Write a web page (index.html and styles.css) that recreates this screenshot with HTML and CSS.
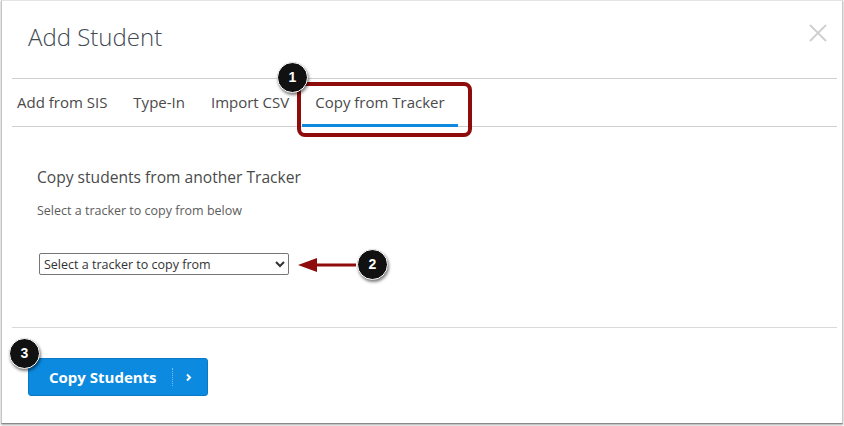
FILE: index.html
```html
<!DOCTYPE html>
<html lang="en">
<head>
<meta charset="utf-8">
<title>Add Student</title>
<link rel="stylesheet" href="styles.css">
</head>
<body>
<div class="modal">
  <header class="head">
    <h1 class="title">Add Student</h1>
    <svg class="close" width="18" height="18" viewBox="0 0 18 18"><path d="M1 1L17 17M17 1L1 17" stroke="#cfcfcf" stroke-width="1.8" fill="none"/></svg>
  </header>
  <nav class="tabs">
    <span class="tab">Add from SIS</span>
    <span class="tab">Type-In</span>
    <span class="tab">Import CSV</span>
    <span class="tab active">Copy from Tracker</span>
  </nav>
  <main class="body">
    <h2 class="heading">Copy students from another Tracker</h2>
    <p class="hint">Select a tracker to copy from below</p>
    <select class="picker"><option>Select a tracker to copy from</option></select>
  </main>
  <footer class="foot">
    <button class="btn" type="button">
      <span class="btn-label">Copy Students</span>
      <span class="btn-icon"><svg width="7" height="9" viewBox="0 0 7 9"><path d="M2 1.5L5 4.5L2 7.5" stroke="#fff" stroke-width="2" fill="none"/></svg></span>
    </button>
  </footer>
</div>

<div class="callout-box"></div>
<span class="badge badge-1">1</span>
<span class="badge badge-2">2</span>
<span class="badge badge-3">3</span>
<svg class="arrow" width="60" height="16" viewBox="0 0 60 16"><path d="M58 8H16" stroke="#8f0c0c" stroke-width="3"/><path d="M0 8L19 1V15Z" fill="#8f0c0c"/></svg>
</body>
</html>
```
FILE: styles.css
```css
* { box-sizing: border-box; }
html, body { margin: 0; padding: 0; background: #fff; }
body { width: 844px; height: 426px; position: relative; overflow: hidden; font-family: "Open Sans", sans-serif; color: #4a4a4a; }
.modal {
  width: 842px; height: 424px; margin-left: 1px;
  padding: 0 5px 0 10px;
  background: #fff;
  border-top: 1px solid #e4e4e4;
  border-left: 1px solid #c4c4c4;
  border-right: 1px solid #c8c8c8;
  border-bottom: 1px solid #8a8a8a;
  box-shadow: 0 1px 2px rgba(0,0,0,.35);
  display: flex; flex-direction: column;
}
.head { height: 77px; display: flex; justify-content: space-between; align-items: flex-start; padding: 0 10px 0 16px; }
.title { margin: 18px 0 0; font-size: 24px; line-height: 36px; font-weight: 300; color: #3f4a54; }
.close { margin-top: 23px; }
.tabs { height: 49px; border-top: 1px solid #cfcfcf; border-bottom: 1px solid #cfcfcf; display: flex; padding-left: 5px; }
.tab { font-size: 15px; line-height: 47px; margin-right: 26px; color: #4a4a4a; white-space: nowrap; }
.tab.active { margin-left: -13px; padding: 0 13px; height: 48px; border-bottom: 3px solid #0b8ae0; }
.body { height: 201px; padding: 39px 0 0 25px; border-bottom: 1px solid #d9d9d9; }
.heading { margin: 0; font-size: 15.6px; line-height: 22px; font-weight: 400; color: #4a4a4a; }
.hint { margin: 14px 0 0; font-size: 12.5px; line-height: 18px; font-weight: 400; color: #5c5c5c; }
.picker {
  display: block; margin: 33px 0 0 2px; width: 250px; height: 22px; padding: 0;
  font-family: "Open Sans", sans-serif; font-size: 12.5px; color: #333;
  background: #fff; border: 1px solid #767676; border-radius: 2px;
}
.foot { padding: 30px 0 0 16px; }
.btn {
  width: 180px; height: 38px; padding: 0; display: flex; align-items: center;
  background: #0b8ae0; border: 1px solid #0a78c4; border-radius: 3px;
  color: #fff; font-family: "Open Sans", sans-serif; font-size: 15px; font-weight: 700;
}
.btn-label { width: 143px; padding-left: 20px; text-align: left; white-space: nowrap; }
.btn-icon { width: 35px; height: 18px; border-left: 1px dotted #7cc0ee; display: flex; align-items: center; justify-content: center; padding-right: 4px; }
.callout-box { position: absolute; left: 297px; top: 82px; width: 175px; height: 55px; border: 4px solid #8f0c0c; border-radius: 8px; }
.badge {
  position: absolute; width: 31px; height: 31px; border-radius: 50%;
  background: #111; color: #fff; border: 1px solid #fff;
  font-family: "Liberation Sans", sans-serif; font-size: 14px; font-weight: 700; line-height: 29px; text-align: center;
  box-shadow: 1px 2px 3px rgba(0,0,0,.5);
}
.badge-1 { left: 277px; top: 62px; }
.badge-2 { left: 357px; top: 249px; }
.badge-3 { left: 9px; top: 338px; }
.arrow { position: absolute; left: 298px; top: 257px; }
```
